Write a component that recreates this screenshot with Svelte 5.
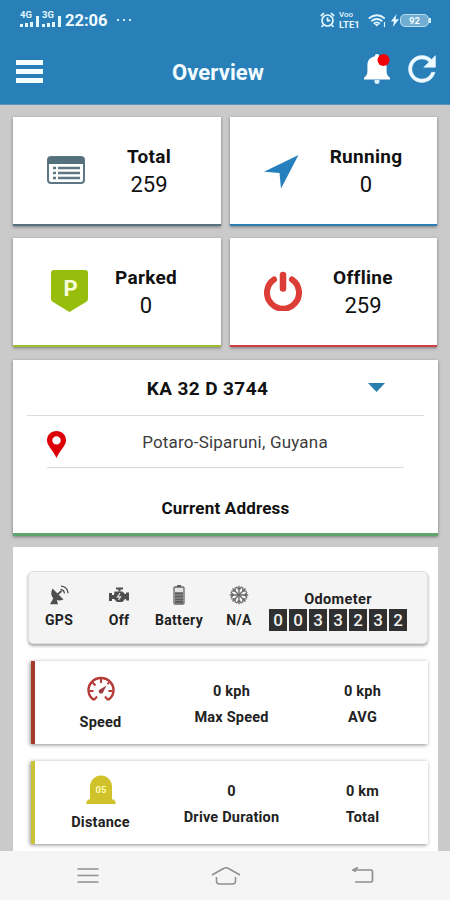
<script lang="ts">
  type Stat = {
    kind: string
    label: string
    value: number
  }

  let stats: Stat[] = [
    { kind: 'total', label: 'Total', value: 259 },
    { kind: 'running', label: 'Running', value: 0 },
    { kind: 'parked', label: 'Parked', value: 0 },
    { kind: 'offline', label: 'Offline', value: 259 },
  ]

  let sensors = [
    { kind: 'gps', label: 'GPS' },
    { kind: 'engine', label: 'Off' },
    { kind: 'battery', label: 'Battery' },
    { kind: 'ac', label: 'N/A' },
  ]

  let odometer = '0033232'

  let metrics = [
    {
      kind: 'speed',
      label: 'Speed',
      values: [
        { value: '0 kph', label: 'Max Speed' },
        { value: '0 kph', label: 'AVG' },
      ],
    },
    {
      kind: 'distance',
      label: 'Distance',
      values: [
        { value: '0', label: 'Drive Duration' },
        { value: '0 km', label: 'Total' },
      ],
    },
  ]
</script>

<div class="screen">
  <header class="header">
    <div class="status">
      {#each ['4G', '3G'] as network}
        <div class="signal">
          <span class="network">{network}</span>
          <svg width="19" height="11" viewBox="0 0 19 11" fill="#e3f7ff">
            <path d="M0 8h3v3H0zM5 7h3v4H5zM10 6h3v5h-3zM16 0h3v11h-3z" />
          </svg>
        </div>
      {/each}
      <span class="time">22:06</span>
      <span class="dots"><i></i><i></i><i></i></span>
      <svg class="alarm" width="15" height="16" viewBox="0 0 15 16" fill="none" stroke="#e3f7ff" stroke-width="1.7">
        <circle cx="7.5" cy="8.5" r="5.5" />
        <path d="M.8 4 4 1.2M14.2 4 11 1.2M3 13l-1.3 2M12 13l1.3 2M7.5 5.5v3.2h2.8" />
      </svg>
      <div class="volte">
        <span>Voo</span>
        <span class="lte">LTE1</span>
      </div>
      <svg class="wifi" width="18" height="13" viewBox="0 0 18 13" fill="none" stroke="#e3f7ff" stroke-width="1.8">
        <path d="M.8 4.5q8-6.5 16 0M3.3 7.2q5.5-4.5 11 0M5.7 9.7q3.1-2.6 6.2 0" />
        <path d="m6.5 10 2.3 2.5 2.3-2.5z" fill="#e3f7ff" stroke="none" />
        <path d="M16.5 8v5" stroke-width="1.2" />
      </svg>
      <svg class="bolt" width="8" height="13" viewBox="0 0 8 13" fill="#e3f7ff">
        <path d="M5.5 0 0 7.5h3L1.8 13 8 5.3H4.5z" />
      </svg>
      <span class="charge">92</span>
      <span class="charge-tip"></span>
    </div>
    <div class="toolbar">
      <div class="menu"><i></i><i></i><i></i></div>
      <h1 class="title">Overview</h1>
      <svg class="bell" width="28" height="32" viewBox="0 0 28 32">
        <path
          d="M13 1c1.5 0 2 .9 2 2.3 5 1 7.6 4.3 7.6 9v6.4c0 2.5 1.2 4.3 3.4 6V26.5H0v-1.8c2.2-1.7 3.4-3.5 3.4-6v-6.4c0-4.7 2.6-8 7.6-9 0-1.4.5-2.3 2-2.3z"
          fill="#fff"
        />
        <path d="M10.5 27h5v1.5a2.5 2.5 0 0 1-5 0z" fill="#d7efff" />
        <circle cx="19.500" cy="7" r="6" fill="#f50006" />
      </svg>
      <svg class="refresh" width="28" height="28" viewBox="3.7 3.7 16.6 16.6">
        <path
          d="M17.65 6.35C16.2 4.9 14.21 4 12 4c-4.42 0-7.99 3.58-7.99 8s3.57 8 7.99 8c3.73 0 6.84-2.55 7.73-6h-2.08c-.82 2.33-3.04 4-5.65 4-3.31 0-6-2.69-6-6s2.69-6 6-6c1.66 0 3.14.69 4.22 1.78L13 11h7V4l-2.35 2.35z"
          fill="#ecf9ff"
          stroke="#ecf9ff"
          stroke-width="0.3"
        />
      </svg>
    </div>
  </header>

  <main class="content">
    <section class="stats">
      {#each stats as stat}
        <div class="stat {stat.kind}">
          <div class="stat-icon">
            {#if stat.kind === 'total'}
              <svg width="38" height="28" viewBox="0 0 38 28">
                <rect x="1" y="1" width="36" height="26" rx="3" fill="#fff" stroke="#5d7884" stroke-width="2" />
                <path d="M1 8V4q0-3 3-3h30q3 0 3 3v4z" fill="#54707d" />
                <path
                  d="M6 12h3M11 12h22M6 17h3M11 17h22M6 22h3M11 22h22"
                  stroke="#5d7884"
                  stroke-width="2.3"
                />
              </svg>
            {:else if stat.kind === 'running'}
              <svg width="35" height="34" viewBox="0 0 35 34">
                <path d="M34.5 0 17 33.5 15.5 18 0 16.8z" fill="#2680bb" />
              </svg>
            {:else if stat.kind === 'parked'}
              <svg width="37" height="42" viewBox="0 0 37 42">
                <path d="M3 0h31q3 0 3 3v26q0 2-2 3L18.5 42 2 32q-2-1-2-3V3q0-3 3-3z" fill="#97be0d" />
                <text x="19.5" y="26" text-anchor="middle" class="letter">P</text>
              </svg>
            {:else}
              <svg width="40" height="40" viewBox="0 0 40 40" fill="none" stroke="#dc3d37" stroke-linecap="round">
                <path d="M11 8.5A16 16 0 1 0 29 8.5" stroke-width="6" />
                <path d="M20 4v13.5" stroke-width="6.5" />
              </svg>
            {/if}
          </div>
          <div class="stat-text">
            <span class="stat-label">{stat.label}</span>
            <span class="stat-value">{stat.value}</span>
          </div>
        </div>
      {/each}
    </section>

    <section class="vehicle">
      <div class="plate">
        <span class="plate-number">KA 32 D 3744</span>
        <svg class="caret" width="17" height="9" viewBox="0 0 17 9">
          <path d="M0 0h17L8.5 9z" fill="#287fad" />
        </svg>
      </div>
      <div class="place">
        <svg width="19" height="27" viewBox="0 0 19 27">
          <path
            d="M9.5 0C4 0 0 4 0 9.3 0 14.5 5 18 9.5 27 14 18 19 14.5 19 9.3 19 4 15 0 9.5 0zm0 5.200a4.200 4.200 0 1 1 0 8.400 4.200 4.200 0 0 1 0-8.400z"
            fill="#dc0007"
            fill-rule="evenodd"
          />
        </svg>
        <span class="place-name">Potaro-Siparuni, Guyana</span>
      </div>
      <div class="address">Current Address</div>
    </section>

    <section class="details">
      <div class="sensors">
        {#each sensors as sensor}
          <div class="sensor">
            <svg width="20" height="20" viewBox="0 0 20 20" fill="#4e4e4e" stroke="#4e4e4e">
              {#if sensor.kind === 'gps'}
                <path d="M3.5 3.5 14.5 14.5Q8 17 4 13 .8 9 3.5 3.5z" stroke="none" />
                <path d="M5 12 1 19.2h8L7.5 14z" stroke="none" />
                <path d="m8.5 9.5 4-3.5" stroke-width="1.8" />
                <path d="M11.5 4.5q3.5.3 4 4M12 1.2q6.5.5 7 7" fill="none" stroke-width="1.3" />
              {:else if sensor.kind === 'engine'}
                <path d="M7 3.5h7M10.5 3.5v3" stroke-width="2" />
                <path
                  d="M5.5 6.5h8l2.5 2.5h1V7.5h3v8h-3V14h-1l-2.5 3H8l-3-3H3v2H0V8h3v2h2z"
                  stroke="none"
                />
                <path d="m11 8-2.5 4h3L9.5 15" fill="none" stroke="#ddd" stroke-width="1.3" />
              {:else if sensor.kind === 'battery'}
                <rect x="5" y="2" width="10" height="17" rx="1" fill="#e2e2e2" stroke="#686868" stroke-width="1.3" />
                <path d="M8 1h4" stroke-width="1.8" />
                <path d="M6 8.5h8M6 11.5h8M6 14.5h8M6 17.2h8" stroke="#5d5d5d" stroke-width="2.3" />
              {:else}
                <g fill="none" stroke="#666" stroke-width="1.3">
                  {#each [0, 45, 90, 135, 180, 225, 270, 315] as angle}
                    <path d="M10 10V.8M7.2 1.8 10 4.5l2.8-2.7" transform="rotate({angle} 10 10)" />
                  {/each}
                </g>
              {/if}
            </svg>
            <span>{sensor.label}</span>
          </div>
        {/each}
        <div class="odometer">
          <span>Odometer</span>
          <div class="digits">
            {#each odometer as digit}
              <span class="digit">{digit}</span>
            {/each}
          </div>
        </div>
      </div>

      {#each metrics as metric}
        <div class="metric {metric.kind}">
          <div class="metric-name">
            {#if metric.kind === 'speed'}
              <svg width="30" height="30" viewBox="0 0 30 30" fill="none" stroke="#b53b37">
                <path d="M8 25A12.5 12 0 1 1 22 25" stroke-width="2.4" />
                <path
                  d="m8 25 3-3.5M22 25l-3-3.5M3.5 16h4M26.5 16h-4M15 4v4M6.5 7.5l3 3M23 7.5 21.5 9"
                  stroke-width="2"
                />
                <path d="m20.5 10.5-3.5 7a2.3 2.3 0 0 1-4-2.5z" fill="#9d3f42" stroke="none" />
              </svg>
            {:else}
              <svg width="30" height="30" viewBox="0 0 30 30">
                <path d="M4 24.5V12a11 11.5 0 0 1 22 0v12.5h2q2 2 1.5 4.5H.5Q0 26.5 2 24.5z" fill="#d0c22b" />
                <text x="15" y="17.5" text-anchor="middle" class="post">05</text>
              </svg>
            {/if}
            <span>{metric.label}</span>
          </div>
          {#each metric.values as item}
            <div class="metric-value">
              <span>{item.value}</span>
              <span>{item.label}</span>
            </div>
          {/each}
        </div>
      {/each}
    </section>
  </main>

  <nav class="nav">
    <svg width="22" height="18" viewBox="0 0 22 18" stroke="#8f8f8f" stroke-width="1.5">
      <path d="M.5 2h21M.5 8.5h21M.5 15h21" />
    </svg>
    <svg width="30" height="20" viewBox="0 0 30 20" fill="none" stroke="#8f8f8f" stroke-width="1.5">
      <path d="M1 9 12.5 2.5Q15 1 17.5 2.5L29 9" />
      <path d="M5.5 11v4q0 3 3 3h13q3 0 3-3v-4" />
    </svg>
    <svg width="22" height="18" viewBox="0 0 22 18" fill="none" stroke="#8f8f8f" stroke-width="1.7">
      <path d="M1 3h18q1.500 0 1.5 1.5v9q0 1.5-1.5 1.5H3" />
      <path d="M6 .5 1 3l3 1.5" />
    </svg>
  </nav>
</div>

<style>
  :global(body) {
    margin: 0;
  }

  .screen {
    display: flex;
    flex-direction: column;
    inline-size: 450px;
    block-size: 900px;
    overflow: hidden;
    font-family: Roboto, sans-serif;
    color: #111;
    background: #cacaca;
  }

  svg {
    display: block;
    flex: none;
  }

  .header {
    box-sizing: border-box;
    flex: none;
    block-size: 105px;
    color: #f2fcff;
    background: #2980b9;
    border-block-end: 1px solid #5b95b6;
  }

  .status {
    display: flex;
    align-items: center;
    block-size: 40px;
    padding-inline-start: 20px;
  }

  .signal {
    display: flex;
    align-items: flex-end;
    inline-size: 19px;
    block-size: 16px;
    margin-block-end: 2px;
    margin-inline-end: 3px;
    position: relative;
  }

  .network {
    position: absolute;
    inset-block-start: 0;
    inset-inline-start: 0;
    font-size: 9.5px;
    font-weight: 700;
    line-height: 8px;
    color: #e3f7ff;
  }

  .time {
    inline-size: 42px;
    margin-inline-start: 1px;
    font-size: 16.5px;
    font-weight: 700;
  }

  .dots {
    display: flex;
    gap: 4px;
    margin-inline-start: 10px;
  }

  .dots i {
    inline-size: 2px;
    block-size: 2px;
    background: #d5efff;
  }

  .alarm {
    margin-inline-start: auto;
  }

  .volte {
    display: flex;
    flex-direction: column;
    inline-size: 23px;
    margin-block-end: 1px;
    margin-inline-start: 4px;
    font-size: 8px;
    font-weight: 500;
    line-height: 9px;
    color: #e3f7ff;
  }

  .lte {
    font-size: 9.5px;
    font-weight: 700;
    line-height: 11px;
  }

  .wifi {
    margin-inline-start: 6px;
  }

  .bolt {
    margin-inline-start: 5px;
  }

  .charge {
    box-sizing: border-box;
    inline-size: 29px;
    block-size: 13px;
    margin-inline-start: 1px;
    border: 1px solid #b6dcef;
    border-radius: 5px;
    background: #71add2;
    font-size: 9.5px;
    font-weight: 700;
    line-height: 11px;
    text-align: center;
  }

  .charge-tip {
    inline-size: 2px;
    block-size: 5px;
    margin-inline-end: 19px;
    background: #d5efff;
  }

  .toolbar {
    display: flex;
    align-items: center;
    block-size: 64px;
    padding-inline: 16px 14px;
  }

  .menu {
    display: flex;
    flex-direction: column;
    gap: 4px;
    inline-size: 27px;
    margin-block-end: 1px;
  }

  .menu i {
    block-size: 5px;
    background: #f4feff;
  }

  .title {
    flex: 1;
    margin: 1px 0 0 129px;
    font-size: 22px;
    font-weight: 700;
    letter-spacing: 0.1px;
  }

  .bell {
    margin-block-end: 6px;
    margin-inline-end: 16px;
  }

  .refresh {
    margin-block-end: 7px;
  }

  .content {
    flex: 1;
    min-block-size: 0;
    padding: 12px 12px 0 13px;
  }

  .stats {
    display: grid;
    grid-template-columns: 208px 207px;
    gap: 12px 9px;
  }

  .stat {
    box-sizing: border-box;
    display: flex;
    align-items: center;
    block-size: 109px;
    border-block-end: 2px solid;
    background: #fff;
    box-shadow: 0 1px 3px rgba(0, 0, 0, 0.4);
  }

  .total {
    border-color: #56717c;
  }

  .running {
    border-color: #2b7db2;
  }

  .parked {
    border-color: #9ebd35;
  }

  .offline {
    border-color: #d23d45;
  }

  .stat-icon {
    display: flex;
    justify-content: center;
    inline-size: 106px;
    margin-block-end: 2px;
    margin-inline-end: -20px;
  }

  .running .stat-icon {
    inline-size: 102px;
    margin-block: 2px 0;
    margin-inline-end: -16px;
  }

  .parked .stat-icon {
    inline-size: 112px;
    margin-inline-end: -29px;
  }

  .offline .stat-icon {
    margin-inline-end: -23px;
  }

  .stat-text {
    display: flex;
    flex-direction: column;
    align-items: center;
    inline-size: 100px;
    padding-block-start: 2px;
  }

  .stat-label {
    font-size: 19px;
    font-weight: 700;
    line-height: 26px;
    letter-spacing: 0.3px;
  }

  .stat-value {
    margin-block-start: 1px;
    font-size: 22px;
    line-height: 28px;
  }

  .letter {
    font-size: 22px;
    font-weight: 700;
    fill: #f6ffd9;
  }

  .vehicle {
    box-sizing: border-box;
    block-size: 176px;
    margin-block-start: 13px;
    padding-inline: 14px;
    border-block-end: 3px solid #5fa46c;
    background: #fff;
    box-shadow: 0 1px 3px rgba(0, 0, 0, 0.4);
  }

  .plate {
    display: flex;
    align-items: center;
    block-size: 55px;
    border-block-end: 1px solid #dcdcdc;
  }

  .plate-number {
    inline-size: 361px;
    margin-block-start: 1px;
    text-align: center;
    font-size: 19px;
    font-weight: 700;
    letter-spacing: 0.4px;
  }

  .caret {
    margin-inline-start: -20px;
  }

  .place {
    display: flex;
    align-items: center;
    block-size: 51px;
    margin-inline: 20px;
    border-block-end: 1px solid #d9d9d9;
  }

  .place svg {
    margin-block-start: 6px;
  }

  .place-name {
    flex: 1;
    text-align: center;
    font-size: 17px;
    letter-spacing: 0.2px;
    color: #3c3c3c;
  }

  .address {
    margin-block-start: 29px;
    text-align: center;
    font-size: 17px;
    font-weight: 700;
    line-height: 22px;
    letter-spacing: 0.2px;
  }

  .details {
    box-sizing: border-box;
    block-size: 304px;
    margin-block-start: 11px;
    padding: 24px 10px 0 15px;
    background: #fff;
  }

  .sensors {
    box-sizing: border-box;
    display: flex;
    block-size: 73px;
    padding-block-start: 13px;
    border: 1px solid #dedede;
    border-radius: 5px;
    background: #f4f4f4;
    box-shadow: 0 2px 3px rgba(0, 0, 0, 0.35);
    font-size: 14px;
    font-weight: 700;
    letter-spacing: 0.35px;
    color: #222;
  }

  .sensor {
    display: flex;
    flex-direction: column;
    align-items: center;
    gap: 7px;
    inline-size: 60px;
    line-height: 17px;
  }

  .odometer {
    display: flex;
    flex-direction: column;
    align-items: center;
    gap: 1px;
    inline-size: 138px;
    padding-block-start: 7px;
    font-size: 14.5px;
    line-height: 16px;
  }

  .digits {
    display: flex;
    gap: 2px;
  }

  .digit {
    inline-size: 18px;
    block-size: 22px;
    background: #303030;
    color: #eee;
    font-size: 17px;
    font-weight: 500;
    line-height: 23px;
    letter-spacing: 0;
    text-align: center;
  }

  .metric {
    box-sizing: border-box;
    display: flex;
    block-size: 83px;
    margin-block-start: 17px;
    margin-inline-start: 3px;
    border-inline-start: 4px solid;
    background: #fff;
    box-shadow: -1px 1px 4px rgba(0, 0, 0, 0.45);
    font-size: 14.5px;
    font-weight: 700;
    letter-spacing: 0.2px;
    color: #222;
  }

  .speed {
    border-color: #a33c2b;
  }

  .distance {
    border-color: #cbc43b;
  }

  .metric-name {
    display: flex;
    flex-direction: column;
    align-items: center;
    gap: 9px;
    inline-size: 131px;
    padding-block-start: 14px;
    line-height: 17px;
  }

  .metric-value {
    display: flex;
    flex-direction: column;
    align-items: center;
    gap: 9px;
    inline-size: 131px;
    padding-block-start: 22px;
    line-height: 17px;
  }

  .post {
    font-size: 9.5px;
    font-weight: 700;
    letter-spacing: 0;
    fill: #fff9b5;
  }

  .nav {
    display: flex;
    flex: none;
    align-items: center;
    justify-content: space-between;
    block-size: 49px;
    padding-inline: 77px 76px;
    background: #f5f5f5;
  }
</style>
